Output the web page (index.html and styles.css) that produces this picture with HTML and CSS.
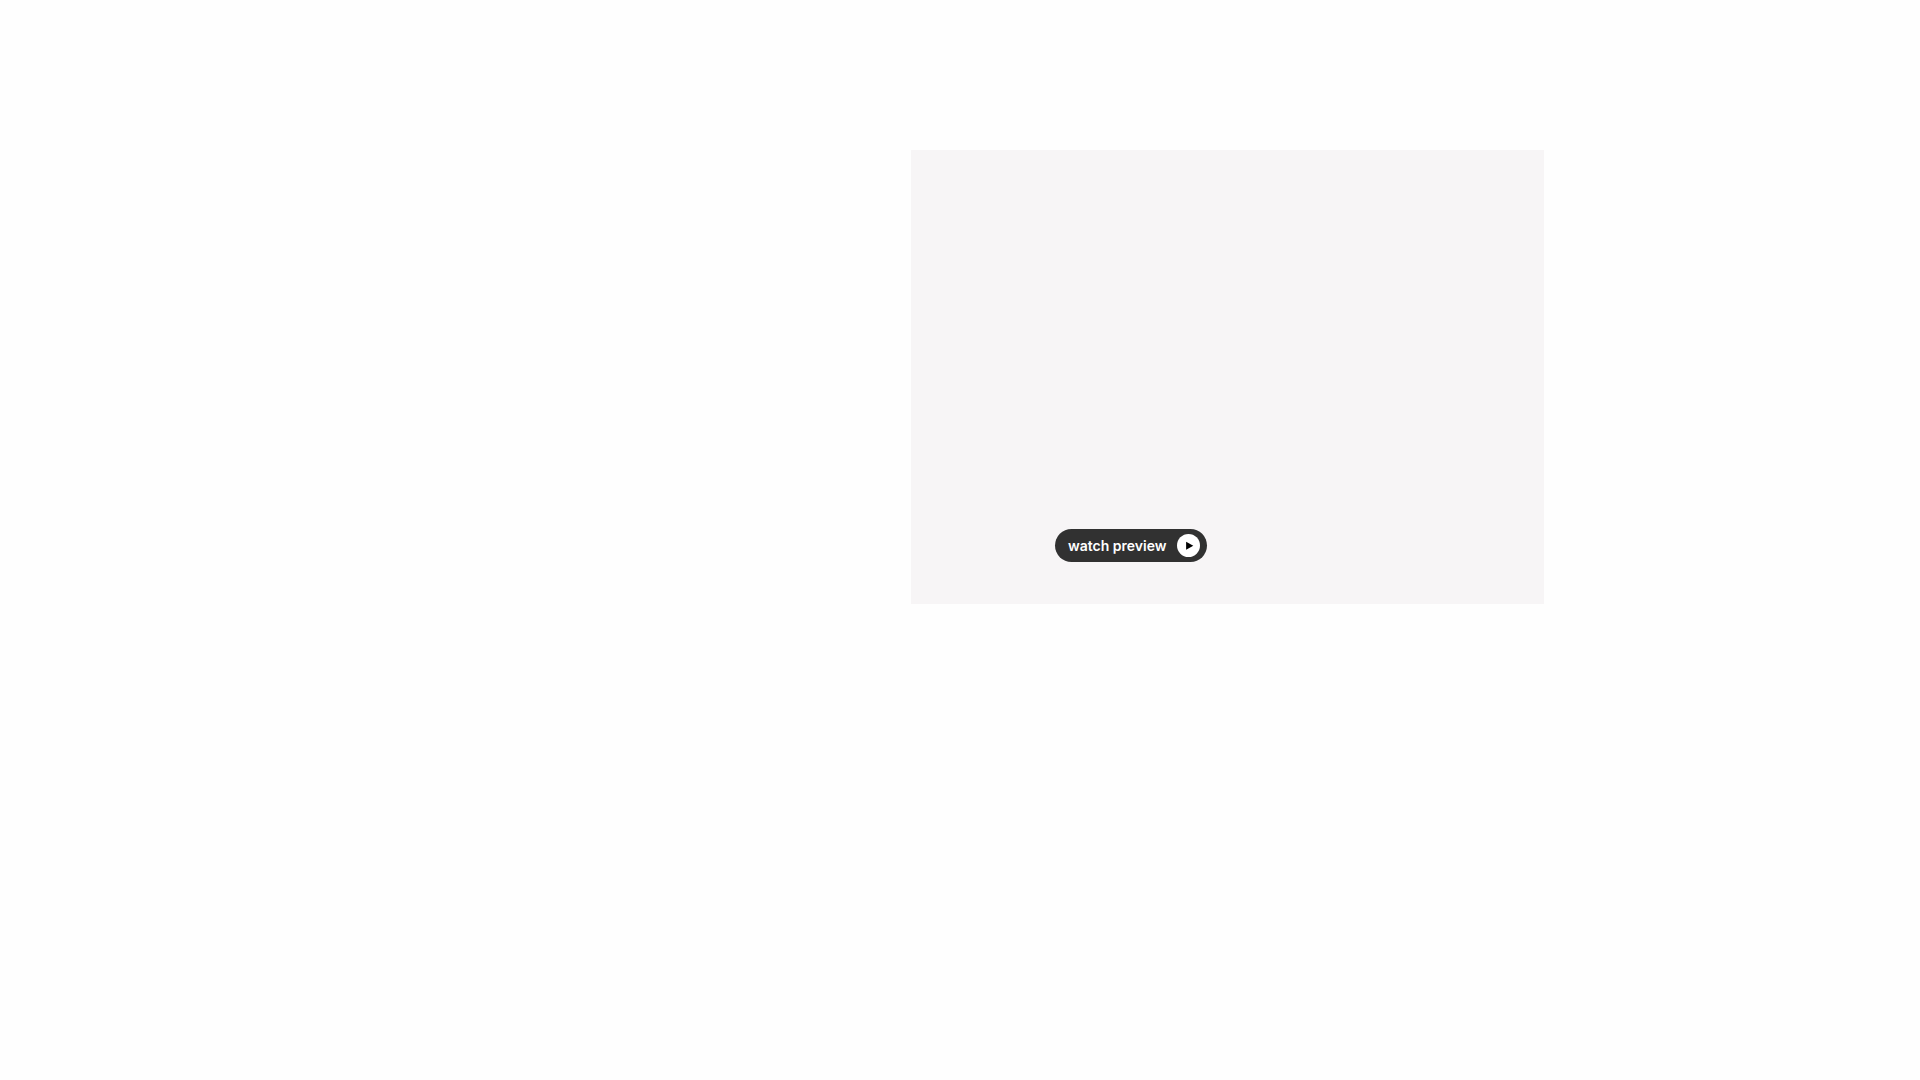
FILE: index.html
```html
<!DOCTYPE html>
<html lang="en">

<head>
    <meta charset="UTF-8">
    <meta name="viewport" content="width=device-width, initial-scale=1.0">
    <title>Watch preview</title>
    <link rel="stylesheet" href="styles.css">
</head>

<body>
    <main class="container">
        <section class="preview">
            <button class="watch-btn" type="button">
                <span>watch preview</span>
                <svg class="play-icon" viewBox="0 0 24 24" aria-hidden="true">
                    <circle cx="12" cy="12" r="12" fill="#fff" />
                    <path d="M9.5 8L17 12.2L9.5 16.4Z" fill="#000" />
                </svg>
            </button>
        </section>
    </main>
</body>

</html>
```
FILE: styles.css
```css
body {
    margin: 0;
    background-color: #fefefe;
    font-family: Inter, "Liberation Sans", sans-serif;
}

.container {
    display: flex;
    justify-content: flex-end;
    max-width: 1168px;
    margin: 0 auto;
    padding-top: 150px;
}

.preview {
    display: flex;
    align-items: flex-end;
    box-sizing: border-box;
    width: 633px;
    max-width: 100%;
    min-height: 454px;
    padding: 42px 144px;
    background-color: #f7f5f6;
}

.watch-btn {
    display: flex;
    align-items: center;
    gap: 10px;
    padding: 5px 7px 5px 13px;
    border: none;
    border-radius: 17px;
    background-color: #313131;
    color: #fff;
    font-family: inherit;
    font-size: 14px;
    font-weight: 600;
    line-height: 20px;
    white-space: nowrap;
    cursor: pointer;
}

.play-icon {
    width: 23px;
    height: 23px;
}
```
